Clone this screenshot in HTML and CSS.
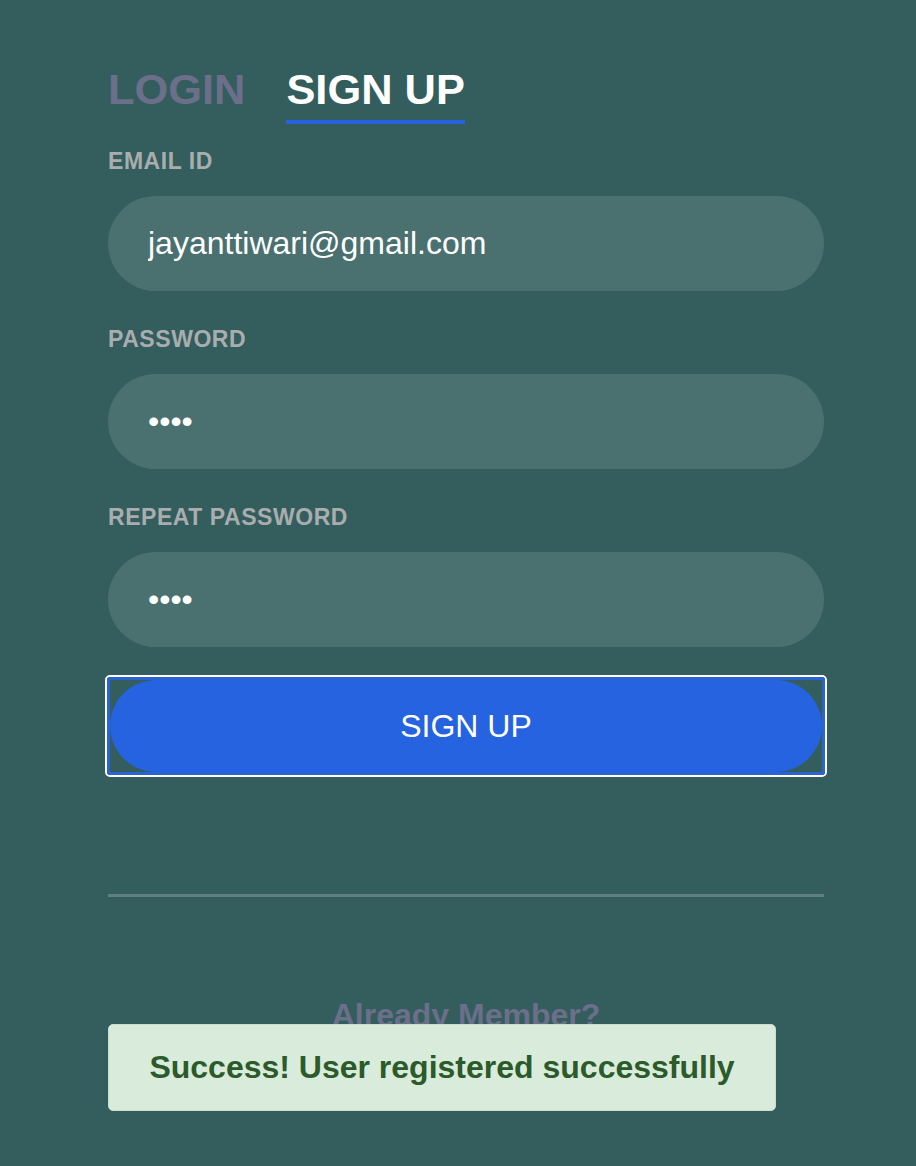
FILE: index.html
```html
<!DOCTYPE html>
<html lang="en">
<head>
<meta charset="utf-8">
<title>Sign Up</title>
<link rel="stylesheet" href="styles.css">
</head>
<body>
<div class="page">
  <div class="tabs">
    <span class="tab">LOGIN</span>
    <span class="tab tab-active">SIGN UP</span>
  </div>
  <form class="form" onsubmit="return false">
    <div class="field">
      <label class="label" for="email">EMAIL ID</label>
      <input class="input" id="email" type="text" value="jayanttiwari@gmail.com">
    </div>
    <div class="field">
      <label class="label" for="pw">PASSWORD</label>
      <input class="input" id="pw" type="password" value="1234">
    </div>
    <div class="field">
      <label class="label" for="pw2">REPEAT PASSWORD</label>
      <input class="input" id="pw2" type="password" value="1234">
    </div>
    <div class="btn-frame">
      <div class="btn-ring">
        <button class="btn" type="submit">SIGN UP</button>
      </div>
    </div>
  </form>
  <div class="divider"></div>
  <p class="member">Already Member?</p>
</div>
<div class="alert">Success! User registered successfully</div>
</body>
</html>
```

FILE: styles.css
```css
html, body {
  margin: 0;
  padding: 0;
  background: #345d5e;
}
body {
  font-family: "Liberation Sans", Arial, Helvetica, sans-serif;
  min-height: 1166px;
}
.page {
  width: 716px;
  padding: 67px 0 0 108px;
}
.tabs {
  display: flex;
  align-items: flex-start;
}
.tab {
  font-size: 43.4px;
  line-height: 44px;
  font-weight: 700;
  color: #6b6f8a;
  padding-bottom: 9px;
  border-bottom: 4px solid transparent;
  margin-right: 41px;
}
.tab-active {
  color: #ffffff;
  border-bottom-color: #2563e0;
}
.form {
  margin: 0;
}
.field {
  margin-top: 37px;
}
.field:first-child {
  margin-top: 26px;
}
.label {
  display: block;
  font-size: 23px;
  line-height: 23px;
  font-weight: 700;
  letter-spacing: 0.55px;
  color: #a9adae;
}
.input {
  display: block;
  box-sizing: border-box;
  width: 100%;
  height: 95px;
  margin-top: 23px;
  padding: 0 40px;
  border: none;
  border-radius: 48px;
  background: #4a716f;
  color: #ffffff;
  font-family: inherit;
  font-size: 32px;
  outline: none;
}
.btn-frame {
  margin: 28px -3px 0;
  border: 2px solid #ffffff;
  border-radius: 5px;
}
.btn-ring {
  border: 3px solid #2a63d2;
  border-radius: 3px;
}
.btn {
  display: flex;
  align-items: center;
  justify-content: center;
  width: 100%;
  height: 92px;
  border: none;
  border-radius: 46px;
  background: #2563e0;
  color: #ffffff;
  font-family: inherit;
  font-size: 32px;
  padding: 0;
  cursor: pointer;
}
.divider {
  height: 3px;
  margin-top: 117px;
  background: #5d7f7f;
}
.member {
  margin: 102px 0 0;
  text-align: center;
  font-size: 32px;
  line-height: 32px;
  font-weight: 700;
  color: #6b6f8a;
}
.alert {
  position: fixed;
  left: 108px;
  top: 1024px;
  box-sizing: border-box;
  width: 668px;
  height: 87px;
  display: flex;
  align-items: center;
  justify-content: center;
  background: #d9ebdb;
  border: 1px solid #c8e0cb;
  border-radius: 5px;
  color: #2b5a2b;
  font-size: 32px;
  font-weight: 700;
}
```
